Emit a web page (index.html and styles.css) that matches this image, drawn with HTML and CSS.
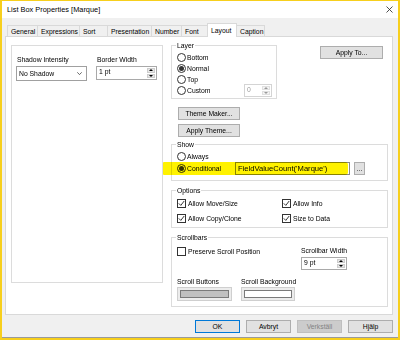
FILE: index.html
```html
<!DOCTYPE html>
<html lang="en">
<head>
    <meta charset="UTF-8">
    <title>List Box Properties [Marque]</title>
    <link rel="stylesheet" href="styles.css">
</head>
<body>
<div class="window">
    <div class="titlebar">
        <span class="title">List Box Properties [Marque]</span>
        <svg class="close" width="7" height="7" viewBox="0 0 7 7"><path d="M0.5 0.5 L6.5 6.5 M6.5 0.5 L0.5 6.5" stroke="#222" stroke-width="0.8" fill="none"/></svg>
    </div>

    <div class="client">
        <div class="tabs">
            <div class="tab">General</div>
            <div class="tab">Expressions</div>
            <div class="tab">Sort</div>
            <div class="tab">Presentation</div>
            <div class="tab">Number</div>
            <div class="tab">Font</div>
            <div class="tab active">Layout</div>
            <div class="tab">Caption</div>
        </div>

        <div class="panel">
            <div class="left-box">
                <div class="field field-shadow">
                    <div class="lbl">Shadow Intensity</div>
                    <div class="select">
                        <span>No Shadow</span>
                        <svg width="5" height="3" viewBox="0 0 5 3"><path d="M0.3 0.3 L2.5 2.6 L4.7 0.3" stroke="#444" stroke-width="0.8" fill="none"/></svg>
                    </div>
                </div>
                <div class="field field-border">
                    <div class="lbl">Border Width</div>
                    <div class="spin">
                        <span class="spin-val">1 pt</span>
                        <div class="spin-btns"><span class="arr up"></span><span class="arr dn"></span></div>
                    </div>
                </div>
            </div>

            <div class="right-col">
                <div class="row-top">
                    <div class="group layer">
                        <div class="group-title">Layer</div>
                        <div class="opt first"><span class="radio"></span>Bottom</div>
                        <div class="opt"><span class="radio on"></span>Normal</div>
                        <div class="opt"><span class="radio"></span>Top</div>
                        <div class="opt custom">
                            <span class="radio"></span>Custom
                            <div class="spin small disabled">
                                <span class="spin-val">0</span>
                                <div class="spin-btns"><span class="arr up"></span><span class="arr dn"></span></div>
                            </div>
                        </div>
                    </div>
                    <button class="btn apply-to">Apply To...</button>
                </div>

                <button class="btn theme first">Theme Maker...</button>
                <button class="btn theme">Apply Theme...</button>

                <div class="group show">
                    <div class="group-title">Show</div>
                    <div class="opt always"><span class="radio"></span>Always</div>
                    <div class="opt cond">
                        <span class="radio on"></span>Conditional
                        <div class="expr">FieldValueCount('Marque')</div>
                        <button class="btn dots">...</button>
                    </div>
                    <div class="highlight"></div>
                </div>

                <div class="group options">
                    <div class="group-title">Options</div>
                    <div class="opt-grid">
                        <div class="opt chk-row"><span class="chk"><svg width="7" height="7" viewBox="0 0 7 7"><path d="M0.8 3.4 L2.8 5.4 L6.2 1" stroke="#222" stroke-width="0.9" fill="none"/></svg></span>Allow Move/Size</div>
                        <div class="opt chk-row"><span class="chk"><svg width="7" height="7" viewBox="0 0 7 7"><path d="M0.8 3.4 L2.8 5.4 L6.2 1" stroke="#222" stroke-width="0.9" fill="none"/></svg></span>Allow Info</div>
                        <div class="opt chk-row"><span class="chk"><svg width="7" height="7" viewBox="0 0 7 7"><path d="M0.8 3.4 L2.8 5.4 L6.2 1" stroke="#222" stroke-width="0.9" fill="none"/></svg></span>Allow Copy/Clone</div>
                        <div class="opt chk-row"><span class="chk"><svg width="7" height="7" viewBox="0 0 7 7"><path d="M0.8 3.4 L2.8 5.4 L6.2 1" stroke="#222" stroke-width="0.9" fill="none"/></svg></span>Size to Data</div>
                    </div>
                </div>

                <div class="group scrollbars">
                    <div class="group-title">Scrollbars</div>
                    <div class="sb-top">
                        <div class="opt chk-row"><span class="chk"></span>Preserve Scroll Position</div>
                        <div>
                            <div class="lbl">Scrollbar Width</div>
                            <div class="spin sb-width">
                                <span class="spin-val">9 pt</span>
                                <div class="spin-btns"><span class="arr up"></span><span class="arr dn"></span></div>
                            </div>
                        </div>
                    </div>
                    <div class="sb-bottom">
                        <div>
                            <div class="lbl">Scroll Buttons</div>
                            <div class="swatch sw-buttons"><div class="sw-inner"></div></div>
                        </div>
                        <div>
                            <div class="lbl">Scroll Background</div>
                            <div class="swatch sw-bg"><div class="sw-inner"></div></div>
                        </div>
                    </div>
                </div>
            </div>
        </div>

        <div class="footer">
            <button class="btn foot default">OK</button>
            <button class="btn foot">Avbryt</button>
            <button class="btn foot disabled">Verkställ</button>
            <button class="btn foot">Hjälp</button>
        </div>
    </div>
</div>
</body>
</html>
```

FILE: styles.css
```css
* {
    box-sizing: border-box;
}
body {
    margin: 0;
    font-family: "Liberation Sans", Arial, sans-serif;
    font-size: 6.8px;
    color: #000;
    background: #fff;
}
.window {
    width: 400px;
    height: 340px;
    border: 2px solid #f7cf1d;
    border-top-width: 1px;
    display: flex;
    flex-direction: column;
}
.titlebar {
    height: 17px;
    background: #fff;
    display: flex;
    align-items: center;
    padding: 0 5px 0 5px;
}
.title {
    flex: 1;
    font-size: 7.4px;
}
.client {
    flex: 1;
    background: #f0f0f0;
    border-bottom: 1px solid #9a9a9a;
    padding: 5px 5px 0 3px;
}

/* tabs */
.tabs {
    display: flex;
    align-items: flex-start;
    height: 14px;
    margin: 0 0 -1px 2px;
}
.tab {
    height: 12px;
    margin-top: 2px;
    margin-right: -1px;
    border: 1px solid #d9d9d9;
    border-bottom: none;
    padding: 1px 0 0 3px;
    line-height: 9px;
    white-space: nowrap;
}
.tab:nth-child(1) { width: 31px; }
.tab:nth-child(2) { width: 43px; }
.tab:nth-child(3) { width: 29px; }
.tab:nth-child(4) { width: 45px; }
.tab:nth-child(5) { width: 31px; }
.tab:nth-child(6) { width: 27px; }
.tab:nth-child(7) { width: 30px; }
.tab:nth-child(8) { width: 29px; }
.tab.active {
    height: 14px;
    margin-top: 0;
    padding-top: 2px;
    background: #fff;
    position: relative;
    z-index: 2;
}

/* main panel */
.panel {
    position: relative;
    z-index: 1;
    height: 279px;
    background: #fff;
    border: 1px solid #d9d9d9;
    display: flex;
    align-items: flex-start;
    padding: 8px 4px 0 5px;
}
.lbl {
    line-height: 9px;
    white-space: nowrap;
}
.left-box {
    width: 152px;
    height: 238px;
    border: 1px solid #dcdcdc;
    padding: 9px 4px 0 4px;
    display: flex;
    gap: 9px;
}
.field .lbl {
    margin-bottom: 2px;
    padding-left: 1px;
}
.field-shadow {
    width: 71px;
}
.field-border {
    width: 61px;
}
.select {
    height: 15px;
    border: 1px solid #a0a0a0;
    display: flex;
    align-items: center;
    justify-content: space-between;
    padding: 0 4px 0 2px;
}
.spin {
    height: 14px;
    border: 1px solid #a9a9a9;
    background: #fff;
    display: flex;
    justify-content: space-between;
}
.spin-val {
    padding: 1px 0 0 2px;
    line-height: 8px;
}
.spin-btns {
    width: 9px;
    display: flex;
    flex-direction: column;
    gap: 1px;
    padding: 1px 1px 1px 0;
}
.arr {
    flex: 1;
    background: #e6e6e6;
    border: 1px solid #cdcdcd;
    display: flex;
    align-items: center;
    justify-content: center;
}
.arr.up::after {
    content: "";
    border-left: 2px solid transparent;
    border-right: 2px solid transparent;
    border-bottom: 2px solid #000;
}
.arr.dn::after {
    content: "";
    border-left: 2px solid transparent;
    border-right: 2px solid transparent;
    border-top: 2px solid #000;
}
.spin.disabled {
    border-color: #d4d4d4;
    color: #9a9a9a;
}
.spin.disabled .arr {
    background: #f4f4f4;
    border-color: #e0e0e0;
}
.spin.disabled .arr::after {
    border-top-color: #9a9a9a;
    border-bottom-color: #9a9a9a;
}

/* right column */
.right-col {
    width: 217px;
    margin-left: 8px;
}
.row-top {
    display: flex;
    align-items: flex-start;
}
.btn {
    display: block;
    font: inherit;
    color: #000;
    background: #e1e1e1;
    border: 1px solid #adadad;
    padding: 0;
    height: 13px;
    line-height: 11px;
    text-align: center;
    white-space: nowrap;
}
.apply-to {
    width: 63px;
    margin: 1px 5px 0 auto;
}
.theme {
    width: 62px;
    margin: 4px 0 0 7px;
}
.theme.first {
    margin-top: 8px;
}

.group {
    position: relative;
    border: 1px solid #dcdcdc;
    padding: 0 4px 0 5px;
}
.group-title {
    display: table;
    margin: -5px 0 0 -1px;
    padding: 0 1px;
    background: #fff;
    line-height: 9px;
}
.opt {
    display: flex;
    align-items: center;
    gap: 1px;
    height: 11px;
    white-space: nowrap;
}
.radio {
    width: 9px;
    height: 9px;
    border: 1px solid #333;
    border-radius: 50%;
    background: #fff;
    display: flex;
    align-items: center;
    justify-content: center;
    flex: none;
}
.radio.on::after {
    content: "";
    width: 5px;
    height: 5px;
    border-radius: 50%;
    background: #333;
}
.chk {
    width: 9px;
    height: 9px;
    border: 1px solid #333;
    background: #fff;
    display: flex;
    flex: none;
}
.chk-row {
    gap: 2px;
}

.layer {
    width: 106px;
    height: 54px;
}
.layer .opt.first {
    margin-top: 2px;
}
.layer .custom {
    height: 13px;
    margin-top: -1px;
}
.spin.small {
    width: 28px;
    height: 13px;
    margin-left: auto;
}

.show {
    height: 37px;
    margin-top: 7px;
}
.show .always {
    height: 12px;
    margin-top: 1px;
}
.show .cond {
    height: 13px;
    margin-right: 18px;
}
.expr {
    width: 115px;
    height: 13px;
    margin-left: auto;
    border: 1px solid #8a8a8a;
    font-size: 7.6px;
    line-height: 11px;
    padding-left: 2px;
}
.dots {
    width: 11px;
    margin-left: 3px;
    line-height: 9px;
}
.highlight {
    position: absolute;
    left: -9px;
    top: 17px;
    width: 185px;
    height: 13px;
    background: #fff200;
    mix-blend-mode: multiply;
    border-radius: 1px 3px 3px 1px;
}

.options {
    height: 38px;
    margin-top: 9px;
}
.opt-grid {
    display: grid;
    grid-template-columns: 105px 1fr;
    row-gap: 4px;
    margin-top: 3px;
}

.scrollbars {
    height: 70px;
    margin-top: 9px;
}
.sb-top {
    display: grid;
    grid-template-columns: 124px 1fr;
    margin-top: 4px;
}
.sb-width {
    width: 46px;
    height: 13px;
    margin-top: 2px;
}
.sb-bottom {
    display: grid;
    grid-template-columns: 64px 1fr;
    margin-top: 7px;
}
.sb-bottom .lbl {
    margin-bottom: 1px;
}
.swatch {
    height: 14px;
    border: 1px solid #cfcfcf;
    background: #ececec;
    padding: 2px;
}
.sw-buttons {
    width: 55px;
}
.sw-bg {
    width: 54px;
}
.sw-inner {
    height: 100%;
    border: 1px solid #7a7a7a;
}
.sw-buttons .sw-inner {
    background: #c0c0c0;
}
.sw-bg .sw-inner {
    background: #fff;
}

/* bottom buttons */
.footer {
    display: flex;
    justify-content: flex-end;
    gap: 6px;
    margin-top: 5px;
}
.foot {
    width: 45px;
}
.foot.default {
    border-color: #0078d7;
}
.foot.disabled {
    background: #cccccc;
    border-color: #bfbfbf;
    color: #838383;
}
```
